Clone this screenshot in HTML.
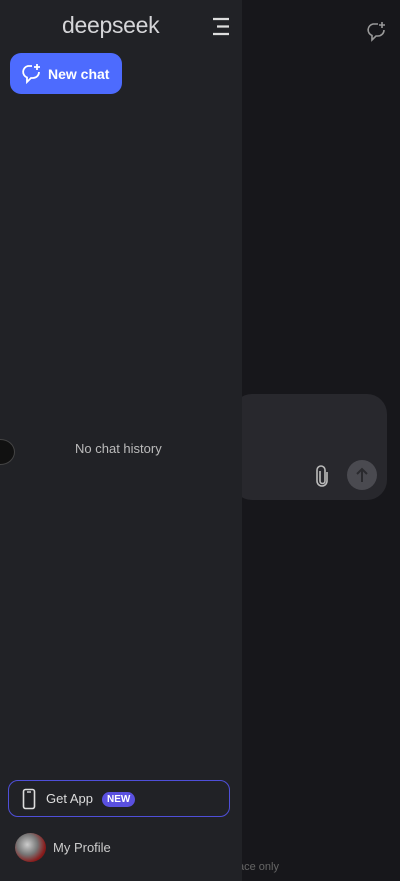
<!DOCTYPE html>
<html><head><meta charset="utf-8"><style>
*{margin:0;padding:0;box-sizing:border-box}
body{width:400px;height:881px;background:#17171b;position:relative;overflow:hidden;font-family:"Liberation Sans",sans-serif;color:#ddd}
.side{position:absolute;left:0;top:0;width:242px;height:881px;background:#212226}
.logo{position:absolute;left:62px;top:12px;font-size:23px;color:#d5d5d8;letter-spacing:-0.3px}
.nc{position:absolute;left:10px;top:53px;width:112px;height:41px;background:#4d6bfe;border-radius:11px;color:#fff;font-weight:bold;font-size:14px}
.nc span{position:absolute;left:38px;top:13px}
.input{position:absolute;left:232px;top:394px;width:155px;height:106px;background:#28282d;border-radius:20px}
.send{position:absolute;left:347px;top:460px;width:30px;height:30px;border-radius:50%;background:#4a4a50}
.getapp{position:absolute;left:8px;top:780px;width:222px;height:37px;border:1.5px solid #4f4fd8;border-radius:10px}
.badge{position:absolute;left:102px;top:792px;background:#5a50e0;color:#fff;font-size:10px;font-weight:bold;padding:2px 5px;border-radius:8px}
</style></head><body>
<div class="input"></div>
<svg style="position:absolute;left:313px;top:464px" width="18" height="24" viewBox="0 0 18 24"><path d="M7 7v10a2.5 2.5 0 0 0 5 0V6a4 4 0 0 0-8 0v11a5 5 0 0 0 10 0V8" fill="none" stroke="#bbb" stroke-width="1.6"/></svg>
<div class="send"><svg width="30" height="30" viewBox="0 0 30 30"><path d="M15 22V9M10 14l5-5 5 5" fill="none" stroke="#2a2a2e" stroke-width="2"/></svg></div>
<svg style="position:absolute;left:365px;top:21px" width="22" height="22" viewBox="0 0 22 22"><path d="M13 3H8a6 6 0 0 0-1 11.5V19l4-4h2a6 6 0 0 0 6-6" fill="none" stroke="#999" stroke-width="1.6"/><path d="M17 1v6M14 4h6" stroke="#999" stroke-width="1.6"/></svg>
<div style="position:absolute;left:238px;top:861px;font-size:11px;color:#666">ace only</div>
<div class="side">
<div class="logo">deepseek</div>
<svg style="position:absolute;left:211px;top:17px" width="20" height="19" viewBox="0 0 20 19"><path d="M2 2h16M6 9.5h12M2 17h16" stroke="#ddd" stroke-width="2.2"/></svg>
<div class="nc"><svg style="position:absolute;left:10px;top:10px" width="22" height="22" viewBox="0 0 22 22"><path d="M12 3H8a6 6 0 0 0-1 11.5V19l4-4h2a6 6 0 0 0 6-6" fill="none" stroke="#fff" stroke-width="1.8"/><path d="M17 1v6M14 4h6" stroke="#fff" stroke-width="1.8"/></svg><span>New chat</span></div>
<div style="position:absolute;left:75px;top:441px;font-size:13px;color:#bbb">No chat history</div>
<div style="position:absolute;left:-14px;top:439px;width:29px;height:26px;border-radius:50%;background:#111;border:1.5px solid #444"></div>
<div class="getapp"></div>
<svg style="position:absolute;left:22px;top:788px" width="14" height="22" viewBox="0 0 14 22"><rect x="1.5" y="1.5" width="11" height="19" rx="2" fill="none" stroke="#ddd" stroke-width="1.6"/><path d="M5 4h4" stroke="#ddd" stroke-width="1.4"/></svg>
<div style="position:absolute;left:46px;top:791px;font-size:13px;color:#ddd">Get App</div>
<div class="badge">NEW</div>
<div style="position:absolute;left:15px;top:833px;width:31px;height:29px;border-radius:50%;background:radial-gradient(circle at 40% 40%,#ccc,#777 40%,#8a1a1a 70%,#222)"></div>
<div style="position:absolute;left:53px;top:840px;font-size:13px;color:#ccc">My Profile</div>
</div>
</body></html>
